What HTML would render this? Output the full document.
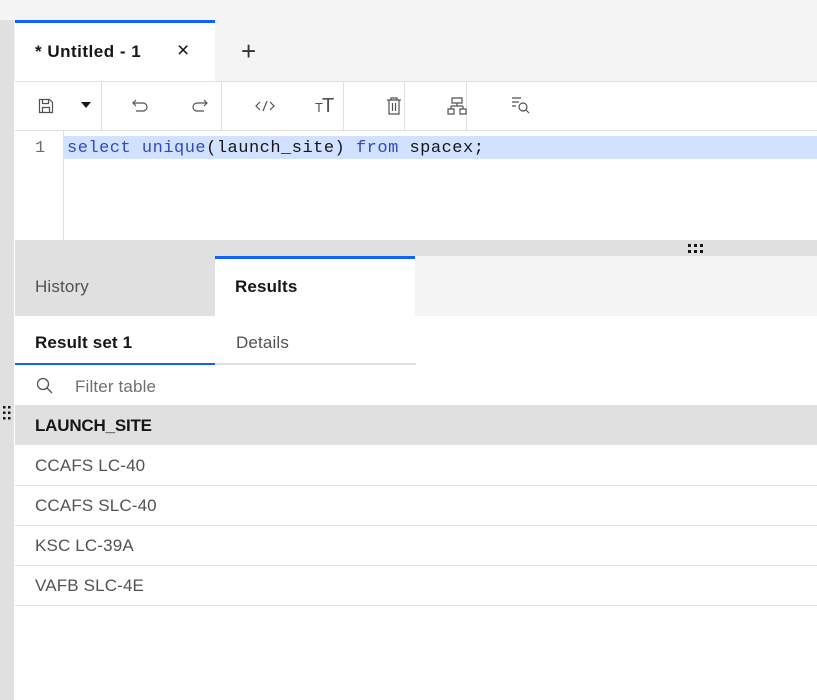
<!DOCTYPE html>
<html><head><style>
*{box-sizing:border-box;margin:0;padding:0}
body{width:817px;height:700px;overflow:hidden;background:#fff;font-family:"Liberation Sans",sans-serif;position:relative;color:#161616;letter-spacing:0.15px}
.a{position:absolute}
.ic{position:absolute;stroke:#525252;fill:none;stroke-width:1.2}
</style></head><body>
<div class="a" style="left:0;top:0;width:817px;height:81px;background:#f4f4f4"></div>
<div class="a" style="left:0;top:20px;width:14px;height:680px;background:#e0e0e0"></div>
<div class="a" style="left:15px;top:20px;width:200px;height:61px;background:#fff;border-top:3px solid #0f62fe"></div>
<div class="a" style="left:35px;top:42px;font-size:17px;font-weight:bold;color:#161616;letter-spacing:0.5px">* Untitled - 1</div>
<div class="a" style="left:177px;top:39px;font-size:21px">×</div>
<div class="a" style="left:241px;top:36px;font-size:26px;font-weight:300;color:#333">+</div>
<div class="a" style="left:15px;top:81px;width:802px;height:50px;border-top:1px solid #e0e0e0;border-bottom:1px solid #e0e0e0;background:#fff"></div>
<div class="a" style="left:101px;top:82px;width:1px;height:48px;background:#e0e0e0"></div>
<div class="a" style="left:221px;top:82px;width:1px;height:48px;background:#e0e0e0"></div>
<div class="a" style="left:343px;top:82px;width:1px;height:48px;background:#e0e0e0"></div>
<div class="a" style="left:404px;top:82px;width:1px;height:48px;background:#e0e0e0"></div>
<div class="a" style="left:466px;top:82px;width:1px;height:48px;background:#e0e0e0"></div>
<svg class="ic" style="left:38px;top:98px" width="16" height="16"><path d="M1.5 1.5h10l3 3v10h-13z M4.5 1.5v4h6v-4 M4.5 14.5v-5h7v5"/></svg>
<svg class="a" style="left:81px;top:102px" width="10" height="6"><path d="M0 0h10L5 6z" fill="#161616"/></svg>
<svg class="ic" style="left:130px;top:98px" width="18" height="16"><path d="M3 5h10a4 4 0 0 1 0 8H6 M6 2L3 5l3 3"/></svg>
<svg class="ic" style="left:192px;top:98px" width="18" height="16"><path d="M15 5H5a4 4 0 0 0 0 8h7 M12 2l3 3-3 3"/></svg>
<svg class="ic" style="left:255px;top:99px" width="20" height="14"><path d="M5 3L1 7l4 4 M15 3l4 4-4 4 M12 2L8 12"/></svg>
<div class="a" style="left:315px;top:95px;font-size:20px;color:#525252;letter-spacing:-1px"><span style="font-size:13px">T</span>T</div>
<svg class="ic" style="left:386px;top:97px" width="16" height="18"><path d="M1 3h14 M5 3V1h6v2 M3 3v14h10V3 M6.5 6v8 M9.5 6v8"/></svg>
<svg class="ic" style="left:447px;top:97px" width="20" height="18"><path d="M5 1h10v5H5z M10 6v3 M4 9h12 M4 9v3 M16 9v3 M1 12h6v5H1z M13 12h6v5h-6z"/></svg>
<svg class="ic" style="left:511px;top:96px" width="20" height="18"><path d="M1 2h9 M1 6h7 M1 10h4"/><circle cx="12" cy="11" r="4"/><path d="M15 14l3 3"/></svg>
<div class="a" style="left:63px;top:131px;width:1px;height:109px;background:#e0e0e0"></div>
<div class="a" style="left:64px;top:136px;width:753px;height:23px;background:#d0e2ff"></div>
<div class="a" style="left:35px;top:139px;font-family:'Liberation Mono',monospace;font-size:17px;color:#6f6f6f;letter-spacing:0">1</div>
<div class="a" style="left:67px;top:139px;font-family:'Liberation Mono',monospace;font-size:17px;color:#161616;white-space:pre;letter-spacing:0.5px"><span style="color:#3448c5">select</span> <span style="color:#3448c5">unique</span>(launch_site) <span style="color:#3448c5">from</span> spacex;</div>
<div class="a" style="left:15px;top:240px;width:802px;height:16px;background:#e0e0e0"></div>
<svg class="a" style="left:688px;top:244px" width="16" height="9" fill="#161616"><rect x="0" y="0" width="3" height="3"/><rect x="6" y="0" width="3" height="3"/><rect x="12" y="0" width="3" height="3"/><rect x="0" y="6" width="3" height="3"/><rect x="6" y="6" width="3" height="3"/><rect x="12" y="6" width="3" height="3"/></svg>
<div class="a" style="left:15px;top:256px;width:802px;height:60px;background:#f4f4f4"></div>
<div class="a" style="left:15px;top:256px;width:200px;height:60px;background:#e0e0e0"></div>
<div class="a" style="left:215px;top:256px;width:200px;height:60px;background:#fff;border-top:3px solid #0f62fe"></div>
<div class="a" style="left:35px;top:277px;font-size:17px;color:#525252">History</div>
<div class="a" style="left:235px;top:277px;font-size:17px;font-weight:bold">Results</div>
<div class="a" style="left:15px;top:363px;width:401px;height:2px;background:#e0e0e0"></div>
<div class="a" style="left:15px;top:363px;width:200px;height:2px;background:#0f62fe"></div>
<div class="a" style="left:35px;top:333px;font-size:17px;font-weight:bold">Result set 1</div>
<div class="a" style="left:236px;top:333px;font-size:17px;color:#525252">Details</div>
<svg class="a" style="left:36px;top:377px" width="18" height="18" fill="none" stroke="#525252" stroke-width="1.3"><circle cx="7" cy="7" r="5.5"/><path d="M11 11l5 5"/></svg>
<div class="a" style="left:75px;top:377px;font-size:17px;color:#6f6f6f">Filter table</div>
<svg class="a" style="left:2px;top:405px" width="10" height="16" fill="#161616"><rect x="1" y="1" width="2.5" height="2.5"/><rect x="6" y="1" width="2.5" height="2.5"/><rect x="1" y="6.5" width="2.5" height="2.5"/><rect x="6" y="6.5" width="2.5" height="2.5"/><rect x="1" y="12" width="2.5" height="2.5"/><rect x="6" y="12" width="2.5" height="2.5"/></svg>
<div class="a" style="left:15px;top:405px;width:802px;height:40px;background:#e0e0e0"></div>
<div class="a" style="left:35px;top:416px;font-size:17px;font-weight:bold;letter-spacing:-0.2px">LAUNCH_SITE</div>
<div class="a" style="left:15px;top:445px;width:802px;height:41px;border-bottom:1px solid #e0e0e0"></div>
<div class="a" style="left:15px;top:486px;width:802px;height:40px;border-bottom:1px solid #e0e0e0"></div>
<div class="a" style="left:15px;top:526px;width:802px;height:40px;border-bottom:1px solid #e0e0e0"></div>
<div class="a" style="left:15px;top:566px;width:802px;height:40px;border-bottom:1px solid #e0e0e0"></div>
<div class="a" style="left:35px;top:456px;font-size:17px;color:#525252">CCAFS LC-40</div>
<div class="a" style="left:35px;top:496px;font-size:17px;color:#525252">CCAFS SLC-40</div>
<div class="a" style="left:35px;top:536px;font-size:17px;color:#525252">KSC LC-39A</div>
<div class="a" style="left:35px;top:576px;font-size:17px;color:#525252">VAFB SLC-4E</div>
</body></html>
